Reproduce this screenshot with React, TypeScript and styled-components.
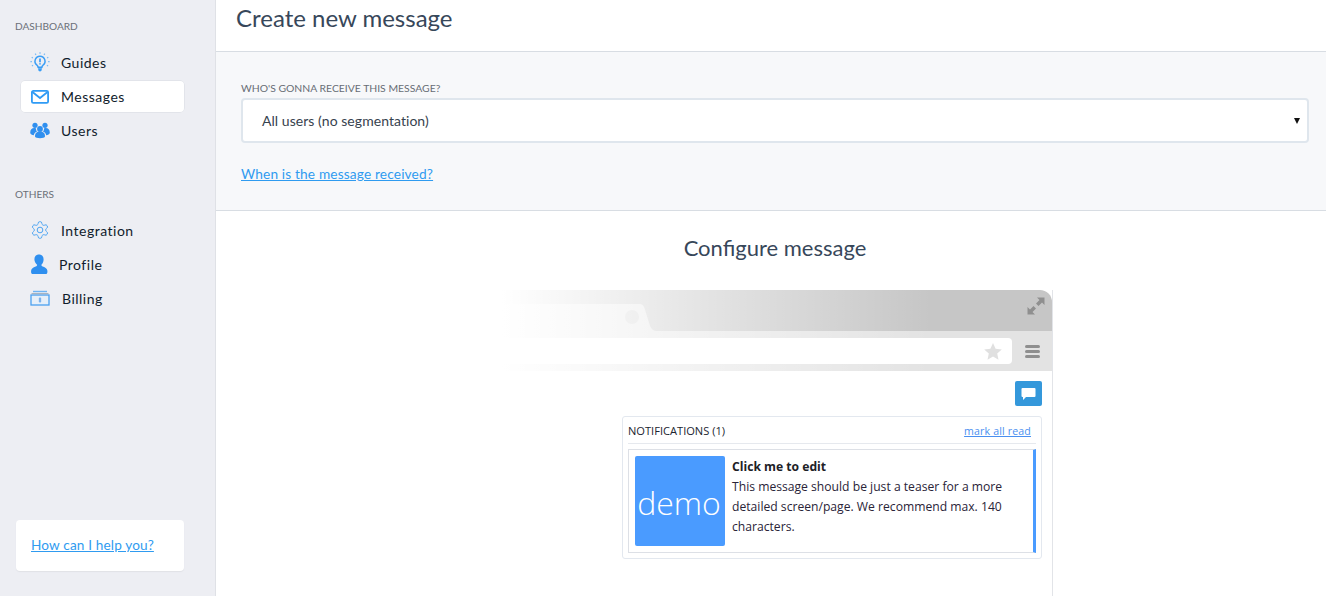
import React from "react";
import styled, { createGlobalStyle } from "styled-components";

const Global = createGlobalStyle`
  html, body { margin: 0; padding: 0; height: 596px; overflow: hidden; background: #fff; }
  #root { height: 596px; }
  * { box-sizing: border-box; }
`;

const Page = styled.div`
  display: flex;
  height: 596px;
  overflow: hidden;
  font-family: "Lato", "Open Sans", sans-serif;
  color: #2c3a47;
`;

const Sidebar = styled.aside`
  width: 216px;
  flex: none;
  height: 596px;
  background: #edeef3;
  border-right: 1px solid #dfe1e6;
  padding: 19px 30px 25px 15px;
  display: flex;
  flex-direction: column;
`;

const SectionLabel = styled.div`
  font-size: 10.1px;
  line-height: 14px;
  color: #6b7078;
  margin-bottom: 12px;
`;

const NavList = styled.nav`
  display: flex;
  flex-direction: column;
  margin-left: 5px;
  margin-bottom: 40px;
`;

const NavItem = styled.div<{ $active?: boolean; $gap: number }>`
  height: ${(p) => (p.$active ? 33 : 34)}px;
  margin-top: ${(p) => (p.$active ? 1 : 0)}px;
  width: 165px;
  display: flex;
  align-items: center;
  gap: ${(p) => p.$gap}px;
  padding-left: 10px;
  font-size: 14px;
  letter-spacing: 0.5px;
  color: #101c2c;
  border-radius: 5px;
  background: ${(p) => (p.$active ? "#fff" : "transparent")};
  box-shadow: ${(p) => (p.$active ? "inset 0 0 0 1px #e2e4ea" : "none")};
`;

const HelpCard = styled.div`
  margin-top: auto;
  width: 168px;
  height: 51px;
  margin-left: 1px;
  background: #fff;
  border-radius: 4px;
  box-shadow: 0 1px 1px #e0e1e6;
  padding: 0 0 2px 15px;
  display: flex;
  align-items: center;
`;

const TextLink = styled.a<{ $size: number; $color?: string }>`
  font-size: ${(p) => p.$size}px;
  color: ${(p) => p.$color || "#2f9bf0"};
  text-decoration: underline;
  letter-spacing: 0.15px;
`;

const Main = styled.main`
  flex: 1;
  min-width: 0;
  display: flex;
  flex-direction: column;
`;

const Header = styled.header`
  height: 52px;
  flex: none;
  border-bottom: 1px solid #d8dde3;
  padding: 3px 0 0 20px;
`;

const PageTitle = styled.h1`
  margin: 0;
  font-size: 24px;
  line-height: 30px;
  font-weight: 400;
  color: #37475a;
`;

const FormSection = styled.section`
  height: 159px;
  flex: none;
  background: #f7f8fa;
  border-bottom: 1px solid #d8dde3;
  padding: 29px 17px 0 25px;
`;

const FieldLabel = styled.label`
  display: block;
  font-size: 10.4px;
  line-height: 14px;
  color: #676d75;
  margin-bottom: 3px;
`;

const SelectBox = styled.div`
  height: 45px;
  background: #fff;
  border: 2px solid #dfe6ed;
  border-radius: 4px;
  padding: 0 7px 0 19px;
  display: flex;
  align-items: center;
  justify-content: space-between;
  font-size: 14px;
  letter-spacing: 0.05px;
  color: #37424e;
  margin-bottom: 20px;
`;

const Caret = styled.span`
  width: 0;
  height: 0;
  border-left: 3px solid transparent;
  border-right: 3px solid transparent;
  border-top: 6px solid #111;
`;

const Configure = styled.section`
  flex: 1;
  min-height: 0;
  padding-top: 24px;
`;

const SubTitle = styled.h2`
  margin: 0 0 29px 0;
  padding-left: 8px;
  text-align: center;
  font-size: 22px;
  line-height: 26px;
  font-weight: 400;
  color: #37475a;
`;

const BrowserFrame = styled.div`
  position: relative;
  width: 551px;
  height: 400px;
  margin-left: 286px;
  border-right: 1px solid #e2e4e8;
`;

const TopBar = styled.div`
  height: 41px;
  background: #c6c6c6;
  border-radius: 0 12px 0 0;
  display: flex;
  align-items: flex-end;
  justify-content: space-between;
  padding-right: 7px;
`;

const TabShape = styled.svg`
  display: block;
`;

const ExpandIcon = styled.svg`
  align-self: flex-start;
  margin-top: 7px;
`;

const ToolBar = styled.div`
  height: 40px;
  background: #e3e3e3;
  display: flex;
  align-items: center;
  gap: 13px;
  padding: 0 12px 0 0;
`;

const AddressBar = styled.div`
  flex: 1;
  height: 26px;
  background: #fff;
  border-radius: 0 4px 4px 0;
  display: flex;
  align-items: center;
  justify-content: flex-end;
  padding-right: 10px;
`;

const MenuLines = styled.div`
  width: 15px;
  display: flex;
  flex-direction: column;
  gap: 2px;
  & > span {
    display: block;
    height: 3px;
    border-radius: 2px;
    background: #8f8f8f;
  }
`;

const FadeOverlay = styled.div`
  position: absolute;
  left: 0;
  top: 0;
  width: 430px;
  height: 81px;
  background: linear-gradient(to right, #fff 0%, rgba(255, 255, 255, 0) 100%);
  pointer-events: none;
`;

const BrowserBody = styled.div`
  padding: 10px 10px 0 120px;
  display: flex;
  flex-direction: column;
  align-items: flex-end;
`;

const ChatButton = styled.div`
  width: 27px;
  height: 25px;
  border-radius: 2px;
  background: #3498db;
  display: flex;
  align-items: center;
  justify-content: center;
  margin-bottom: 10px;
`;

const Panel = styled.div`
  width: 420px;
  height: 143px;
  background: #fff;
  border: 1px solid #e3e8ef;
  border-radius: 3px;
  padding: 0 5px;
`;

const PanelHead = styled.div`
  height: 27px;
  display: flex;
  align-items: center;
  justify-content: space-between;
  border-bottom: 1px solid #e6e9ee;
  padding: 1px 5px 0 0;
  font-family: "Open Sans", sans-serif;
  font-size: 11.1px;
  color: #1c2530;
`;

const NoticeCard = styled.div`
  margin-top: 5px;
  height: 104px;
  border: 1px solid #dde0e6;
  border-right: 3px solid #4a9bff;
  padding: 6px;
  display: flex;
  gap: 7px;
`;

const DemoThumb = styled.div`
  width: 90px;
  height: 90px;
  flex: none;
  border-radius: 2px;
  background: #4a9bff;
  color: #fff;
  display: flex;
  align-items: center;
  justify-content: center;
  font-family: "Open Sans", sans-serif;
  font-weight: 300;
  font-size: 32px;
  padding: 2px 2px 0 0;
`;

const NoticeText = styled.div`
  font-family: "Open Sans", sans-serif;
  font-size: 12.15px;
  line-height: 20px;
  color: #2a2438;
  width: 285px;
  padding-top: 1px;
`;

const NoticeTitle = styled.div`
  font-weight: 700;
  color: #1d2126;
`;

const Bulb = () => (
  <svg width="20" height="20" viewBox="0 0 20 20" fill="none" stroke="#3a9df5">
    <path d="M10 4.200a5 5 0 0 0-3 9c.7.6 1 1.200 1.100 2h3.800c.1-.8.4-1.400 1.100-2a5 5 0 0 0-3-9z" strokeWidth="1.500" />
    <path d="M8.300 16.400h3.400L11 19H9z" fill="#3a9df5" strokeWidth=".6" />
    <path d="M10 6.400v3.800M10 11.200v1.400" strokeWidth="1.700" />
    <path d="M10 .3v1.500M5.200 1.700l.8 1.200M14.800 1.700l-.8 1.200M1.700 5.200l1.200.8M18.300 5.200l-1.200.8M.4 9.600h1.500M18.100 9.600h1.500M1.900 14l1.200-.7M18.100 14l-1.200-.7" strokeWidth="1.200" opacity=".65" />
  </svg>
);
const Envelope = () => (
  <svg width="20" height="20" viewBox="0 0 20 20" fill="none" stroke="#2f9bf5" strokeWidth="1.800">
    <rect x="1.900" y="3.900" width="16.200" height="12" rx="1.400" />
    <path d="M2.500 5l7.500 6 7.500-6" />
  </svg>
);
const UsersIcon = () => (
  <svg width="20" height="20" viewBox="0 0 20 20" fill="#2f8fef">
    <circle cx="10" cy="9" r="2.900" />
    <circle cx="5" cy="5.300" r="2.600" />
    <circle cx="15" cy="5.300" r="2.600" />
    <path d="M5 16.500c0-3.600 1.800-5 5-5s5 1.400 5 5c0 2.300-10 2.300-10 0z" />
    <path d="M.200 12.700c0-3 1.600-4.600 4-4.600.8 0 1.300.1 1.800.4-.1 1.500.4 2.500 1.200 3.100-2 .7-3.200 1.900-3.400 3.600-1.500-.2-3.600-1.100-3.600-2.500zM19.800 12.700c0-3-1.600-4.600-4-4.600-.8 0-1.300.1-1.800.4.100 1.500-.4 2.500-1.200 3.100 2 .7 3.200 1.900 3.400 3.600 1.500-.2 3.600-1.100 3.600-2.500z" />
  </svg>
);
const Gear = () => (
  <svg width="20" height="20" viewBox="0 0 24 24" fill="none" stroke="#4ea5f2" strokeWidth="1.200" strokeLinejoin="round">
    <path d="M12.220 2h-.44a2 2 0 0 0-2 2v.18a2 2 0 0 1-1 1.730l-.43.250a2 2 0 0 1-2 0l-.15-.08a2 2 0 0 0-2.730.730l-.22.380a2 2 0 0 0 .730 2.730l.150.100a2 2 0 0 1 1 1.720v.510a2 2 0 0 1-1 1.740l-.15.090a2 2 0 0 0-.73 2.730l.22.380a2 2 0 0 0 2.730.730l.150-.08a2 2 0 0 1 2 0l.430.250a2 2 0 0 1 1 1.730V20a2 2 0 0 0 2 2h.440a2 2 0 0 0 2-2v-.18a2 2 0 0 1 1-1.730l.430-.25a2 2 0 0 1 2 0l.150.080a2 2 0 0 0 2.730-.73l.220-.39a2 2 0 0 0-.73-2.730l-.15-.08a2 2 0 0 1-1-1.740v-.5a2 2 0 0 1 1-1.740l.150-.09a2 2 0 0 0 .730-2.730l-.22-.38a2 2 0 0 0-2.730-.73l-.15.080a2 2 0 0 1-2 0l-.43-.25a2 2 0 0 1-1-1.730V4a2 2 0 0 0-2-2z" />
    <circle cx="12" cy="12" r="3.400" />
  </svg>
);
const Person = () => (
  <svg width="18" height="21" viewBox="0 0 18 21" fill="#2f8fef">
    <path d="M9 .500c2.800 0 4.600 2 4.600 4.800 0 2.400-.9 4.200-2.200 5.400 0 1 .3 1.400 1.400 1.800 2.700 1 4.300 2 4.600 4.200.1 1.200 0 2.800-1 3.300H2.100c-1-.5-1.100-2.100-1-3.300.3-2.200 1.900-3.200 4.600-4.200 1.100-.4 1.400-.8 1.400-1.800C5.800 9.500 4.400 7.700 4.400 5.300 4.400 2.500 6.200.500 9 .500z" />
  </svg>
);
const BillingIcon = () => (
  <svg width="20" height="16" viewBox="0 0 20 16" fill="none">
    <rect x="1" y="5" width="18" height="10" fill="#e6eff9" stroke="#4aa0f0" strokeWidth="1.300" />
    <path d="M1.500 3.600h17" stroke="#a9b4c0" strokeWidth="1.200" />
    <path d="M3 1.500h14" stroke="#6fb4f3" strokeWidth="1.400" />
    <path d="M10 7.500v5" stroke="#5c9fe6" strokeWidth="1.200" />
    <path d="M8.700 9h2.600M8.700 11h2.600" stroke="#5c9fe6" strokeWidth=".8" />
  </svg>
);

export default function App() {
  return (
    <Page>
      <Global />
      <Sidebar>
        <SectionLabel>DASHBOARD</SectionLabel>
        <NavList>
          <NavItem $gap={11}><Bulb />Guides</NavItem>
          <NavItem $active $gap={11}><Envelope />Messages</NavItem>
          <NavItem $gap={11}><UsersIcon />Users</NavItem>
        </NavList>
        <SectionLabel>OTHERS</SectionLabel>
        <NavList>
          <NavItem $gap={11}><Gear />Integration</NavItem>
          <NavItem $gap={11}><Person />Profile</NavItem>
          <NavItem $gap={12}><BillingIcon />Billing</NavItem>
        </NavList>
        <HelpCard>
          <TextLink $size={13.6}>How can I help you?</TextLink>
        </HelpCard>
      </Sidebar>
      <Main>
        <Header>
          <PageTitle>Create new message</PageTitle>
        </Header>
        <FormSection>
          <FieldLabel>WHO'S GONNA RECEIVE THIS MESSAGE?</FieldLabel>
          <SelectBox>
            All users (no segmentation)
            <Caret />
          </SelectBox>
          <TextLink $size={13.7}>When is the message received?</TextLink>
        </FormSection>
        <Configure>
          <SubTitle>Configure message</SubTitle>
          <BrowserFrame>
            <TopBar>
              <TabShape width="155" height="27" viewBox="0 0 155 27">
                <path d="M0 0H138Q141 0 142.500 4L148 22Q150 27 155 27H0Z" fill="#e3e3e3" />
                <circle cx="130" cy="13" r="7" fill="#cfcfcf" />
              </TabShape>
              <ExpandIcon width="18" height="18" viewBox="0 0 18 18" fill="#8f8f8f">
                <path d="M10 .500H17.500V8L15 5.500L11.500 9L9 6.500L12.500 3Z" />
                <path d="M8 17.500H.500V10L3 12.500L6.500 9L9 11.500L5.500 15Z" />
              </ExpandIcon>
            </TopBar>
            <ToolBar>
              <AddressBar>
                <svg width="18" height="17" viewBox="0 0 18 17" fill="#e0e0e0">
                  <path d="M9 0l2.600 5.700 6.200.7-4.600 4.200 1.300 6.100L9 13.600 3.500 16.700l1.300-6.100L.2 6.400l6.200-.7z" />
                </svg>
              </AddressBar>
              <MenuLines><span /><span /><span /></MenuLines>
            </ToolBar>
            <FadeOverlay />
            <BrowserBody>
              <ChatButton>
                <svg width="15" height="14" viewBox="0 0 15 14" fill="#fff">
                  <path d="M1.500 1h12a1 1 0 0 1 1 1v7a1 1 0 0 1-1 1H5l-3 3v-3h-.5a1 1 0 0 1-1-1V2a1 1 0 0 1 1-1z" />
                </svg>
              </ChatButton>
              <Panel>
                <PanelHead>
                  NOTIFICATIONS (1)
                  <TextLink $size={10.600} $color="#4a8ff0">mark all read</TextLink>
                </PanelHead>
                <NoticeCard>
                  <DemoThumb>demo</DemoThumb>
                  <NoticeText>
                    <NoticeTitle>Click me to edit</NoticeTitle>
                    This message should be just a teaser for a more detailed screen/page. We recommend max. 140 characters.
                  </NoticeText>
                </NoticeCard>
              </Panel>
            </BrowserBody>
          </BrowserFrame>
        </Configure>
      </Main>
    </Page>
  );
}
